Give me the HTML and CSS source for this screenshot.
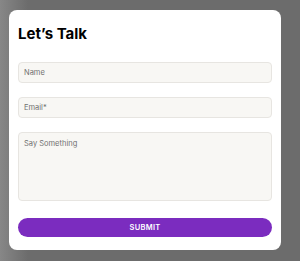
FILE: index.html
```html
<!DOCTYPE html>
<html lang="en">

<head>
  <meta charset="UTF-8">
  <meta name="viewport" content="width=device-width, initial-scale=1.0">
  <title>Let's Talk</title>
  <link rel="stylesheet" href="styles.css">
</head>

<body>
  <div class="contact-card">
    <h2>Let’s Talk</h2>
    <form class="contact-form">
      <input type="text" placeholder="Name">
      <input type="email" placeholder="Email*">
      <textarea placeholder="Say Something"></textarea>
      <button type="submit" class="submit-btn">SUBMIT</button>
    </form>
  </div>
</body>

</html>
```

FILE: styles.css
```css
body {
  margin: 0;
  padding: 0;
  height: 261px;
  background: linear-gradient(to right, #878787, #6c6c6c 28px);
  font-family: Inter, "Noto Sans", sans-serif;
  color: #111;
}

.contact-card {
  box-sizing: border-box;
  width: 272px;
  margin: 10px 0 0 9px;
  padding: 14px 9px 13px 9px;
  background-color: #fff;
  border-radius: 8px;
}

.contact-card h2 {
  margin: 0;
  font-size: 15px;
  line-height: 20px;
  font-weight: 700;
  color: #000;
}

.contact-form {
  display: flex;
  flex-direction: column;
  margin-top: 18px;
}

.contact-form input,
.contact-form textarea {
  box-sizing: border-box;
  width: 100%;
  margin: 0 0 14px 0;
  padding: 0 5px;
  background-color: #f8f7f4;
  border: 1px solid #e7e5e1;
  border-radius: 4px;
  font-family: Inter, "Noto Sans", sans-serif;
  font-size: 7.5px;
  color: #333;
  outline: none;
}

.contact-form input {
  height: 21px;
}

.contact-form textarea {
  height: 69px;
  padding-top: 6px;
  resize: none;
}

.contact-form input::placeholder,
.contact-form textarea::placeholder {
  color: #707070;
}

.submit-btn {
  height: 19px;
  margin-top: 3px;
  border: none;
  border-radius: 10px;
  background-color: #7b2cbf;
  color: #fff;
  font-family: Inter, "Noto Sans", sans-serif;
  font-size: 7.5px;
  font-weight: 600;
  letter-spacing: 0.3px;
  cursor: pointer;
}
```
